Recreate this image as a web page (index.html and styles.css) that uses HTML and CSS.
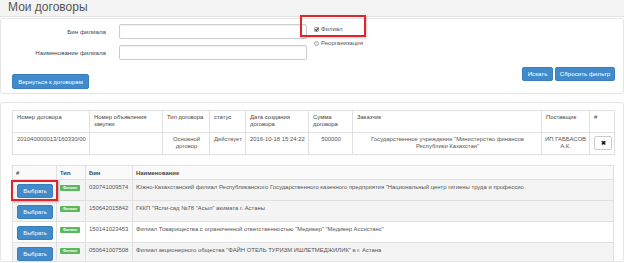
FILE: index.html
```html
<!DOCTYPE html>
<html lang="ru">
<head>
    <meta charset="UTF-8">
    <title>Мои договоры</title>
    <link rel="stylesheet" href="styles.css">
</head>
<body>
    <div class="page-header">
        <h1>Мои договоры</h1>
    </div>

    <div class="panel filter">
        <div class="filter-grid">
            <label class="field-label">Бин филиала</label>
            <input class="field" type="text">
            <div class="checks">
                <div class="check-item"><span class="box checked"></span>Филиал</div>
                <div class="check-item"><span class="box round"></span>Реорганизация</div>
            </div>
            <label class="field-label">Наименование филиала</label>
            <input class="field" type="text">
        </div>
        <div class="filter-actions">
            <button class="btn back">Вернуться к договорам</button>
            <div class="right-actions">
                <button class="btn">Искать</button>
                <button class="btn">Сбросить фильтр</button>
            </div>
        </div>
    </div>

    <div class="panel results">
        <table class="contracts">
            <colgroup>
                <col style="width:77px"><col style="width:73px"><col style="width:47px">
                <col style="width:36px"><col style="width:63px"><col style="width:44px">
                <col style="width:189px"><col style="width:48px"><col style="width:25px">
            </colgroup>
            <thead>
                <tr>
                    <th>Номер договора</th>
                    <th>Номер объявления закупки</th>
                    <th>Тип договора</th>
                    <th>статус</th>
                    <th>Дата создания договора</th>
                    <th>Сумма договора</th>
                    <th>Заказчик</th>
                    <th>Поставщик</th>
                    <th>#</th>
                </tr>
            </thead>
            <tbody>
                <tr>
                    <td>201040000013/160330/00</td>
                    <td></td>
                    <td class="center">Основной договор</td>
                    <td>Действует</td>
                    <td>2016-10-18 15:24:22</td>
                    <td class="center">500000</td>
                    <td class="center">Государственное учреждение "Министерство финансов Республики Казахстан"</td>
                    <td class="center narrow">ИП ГАББАСОВ А.К.</td>
                    <td class="center"><button class="btn-remove">&#10006;</button></td>
                </tr>
            </tbody>
        </table>

        <table class="branches">
            <colgroup>
                <col style="width:44px"><col style="width:29px"><col style="width:47px"><col>
            </colgroup>
            <thead>
                <tr>
                    <th>#</th>
                    <th>Тип</th>
                    <th>Бин</th>
                    <th>Наименование</th>
                </tr>
            </thead>
            <tbody>
                <tr class="gray">
                    <td><span class="marked"><button class="btn choose">Выбрать</button></span></td>
                    <td><span class="badge">Филиал</span></td>
                    <td>030741009574</td>
                    <td class="name">Южно-Казахстанский филиал Республиканского Государственного казенного предприятия "Национальный центр гигиены труда и профессио</td>
                </tr>
                <tr class="gray">
                    <td><button class="btn choose">Выбрать</button></td>
                    <td><span class="badge">Филиал</span></td>
                    <td>150642015842</td>
                    <td class="name">ГККП "Ясли-сад №78 "Асыл" акимата г. Астаны</td>
                </tr>
                <tr>
                    <td><button class="btn choose">Выбрать</button></td>
                    <td><span class="badge">Филиал</span></td>
                    <td>150141023453</td>
                    <td class="name">Филиал Товарищества с ограниченной ответственностью "Медивер" "Медивер Ассистанс"</td>
                </tr>
                <tr class="gray">
                    <td><button class="btn choose">Выбрать</button></td>
                    <td><span class="badge">Филиал</span></td>
                    <td>050641007508</td>
                    <td class="name">Филиал акционерного общества "ФАЙН ОТЕЛЬ ТУРИЗМ ИШЛЕТМЕДЖИЛИК" в г. Астана</td>
                </tr>
            </tbody>
        </table>
    </div>
</body>
</html>
```

FILE: styles.css
```css
html, body {
    height: 263px;
    overflow: hidden;
}
body {
    margin: 0;
    font-family: 'Liberation Sans', Arial, sans-serif;
    color: #555;
    background: #fff;
}
.page-header {
    height: 16px;
    background: #f3f3f3;
    border-bottom: 1px solid #e2e2e2;
    padding-left: 8px;
}
.page-header h1 {
    margin: 0;
    font-size: 12px;
    font-weight: normal;
    line-height: 15px;
    color: #555;
}
.panel {
    border: 1px solid #e4e4e4;
    border-radius: 3px;
    background: #fff;
}
.filter {
    margin-top: 1px;
    padding: 5px 8px 4px 11px;
}
.filter-grid {
    display: grid;
    grid-template-columns: 107px 188px 1fr;
    grid-template-rows: 15px 15px;
    row-gap: 6px;
}
.field-label {
    font-size: 6.2px;
    text-align: right;
    padding-right: 13px;
    line-height: 15px;
    color: #444;
}
.field {
    box-sizing: border-box;
    width: 188px;
    height: 15px;
    margin: 0;
    border: 1px solid #ccc;
    border-radius: 2px;
    box-shadow: inset 0 1px 1px rgba(0, 0, 0, 0.06);
}
.checks {
    grid-column: 3;
    grid-row: 1 / span 2;
    padding-left: 7px;
    padding-top: 1px;
    display: flex;
    flex-direction: column;
    gap: 6px;
    position: relative;
}
.checks::before {
    content: '';
    position: absolute;
    left: -7px;
    top: -9px;
    width: 62px;
    height: 18px;
    border: 2px solid #e0242b;
    box-shadow: 1px 1px 2px rgba(0, 0, 0, 0.2);
}
.check-item {
    display: flex;
    align-items: center;
    height: 8px;
    font-size: 6px;
    color: #555;
}
.box {
    display: inline-block;
    box-sizing: border-box;
    width: 5px;
    height: 5px;
    border: 1px solid #aaa;
    border-radius: 1px;
    background: #eee;
    margin-right: 2px;
    position: relative;
}
.box.checked::after {
    content: '';
    position: absolute;
    left: 1px;
    top: -1px;
    width: 1px;
    height: 3px;
    border: solid #333;
    border-width: 0 1px 1px 0;
    transform: rotate(40deg);
}
.box.round {
    border-radius: 50%;
}
.filter-actions {
    display: flex;
    justify-content: space-between;
    align-items: flex-start;
    margin-top: 7px;
}
.btn {
    font-family: inherit;
    font-size: 6.2px;
    color: #fff;
    background: #428bca;
    border: 1px solid #3a7fbd;
    border-radius: 2px;
    padding: 0 4px;
    height: 14px;
    line-height: 12px;
    margin: 0;
    white-space: nowrap;
    cursor: pointer;
}
.back {
    margin-top: 7px;
    height: 15px;
    width: 77px;
    padding: 0;
    font-size: 6px;
}
.right-actions {
    display: flex;
    gap: 2px;
}
.right-actions .btn:first-child {
    width: 31px;
    padding: 0;
}
.right-actions .btn:last-child {
    width: 60px;
    padding: 0;
}
.results {
    margin-top: 8px;
    padding: 7px 9px 0 11px;
    height: 151px;
    overflow: hidden;
}
table {
    border-collapse: collapse;
    table-layout: fixed;
    width: 602px;
}
th, td {
    border: 1px solid #e0e0e0;
    text-align: left;
    vertical-align: top;
    font-weight: normal;
}
.contracts th, .contracts td {
    font-size: 5.9px;
    line-height: 7px;
    padding: 3px 3px 0 4px;
    height: 18px;
    color: #555;
}
.contracts th {
    color: #444;
}
.contracts .center {
    text-align: center;
}
.contracts .narrow {
    padding-left: 1px;
    padding-right: 1px;
}
.btn-remove {
    width: 18px;
    height: 14px;
    padding: 0;
    margin: 0;
    background: #fff;
    border: 1px solid #ccc;
    border-radius: 2px;
    font-size: 6px;
    line-height: 12px;
    color: #111;
    font-weight: bold;
}
.branches {
    margin-top: 10px;
}
.branches th, .branches td {
    font-size: 5.9px;
    line-height: 8px;
    padding: 3px 3px 0 3px;
    color: #555;
    white-space: nowrap;
}
.branches .name {
    overflow: hidden;
}
.branches th {
    font-weight: bold;
    color: #444;
    height: 10px;
    background: #fafafa;
}
.branches td {
    height: 17px;
}
.branches td:first-child {
    padding-left: 4px;
}
.branches tr.gray td {
    background: #f4f4f4;
}
.choose {
    width: 36px;
    margin-top: 1px;
    padding: 0;
    font-size: 5.8px;
}
.marked {
    position: relative;
    display: inline-block;
}
.marked::after {
    content: '';
    position: absolute;
    left: -6px;
    top: -3px;
    width: 43px;
    height: 17px;
    border: 2px solid #e0242b;
    box-shadow: 1px 1px 2px rgba(0, 0, 0, 0.3);
}
.badge {
    display: inline-block;
    margin-top: 2px;
    background: #5cb85c;
    color: #fff;
    font-size: 3.6px;
    font-weight: bold;
    line-height: 6px;
    padding: 0 2px;
    border-radius: 1px;
    width: 16px;
    text-align: center;
}
```
